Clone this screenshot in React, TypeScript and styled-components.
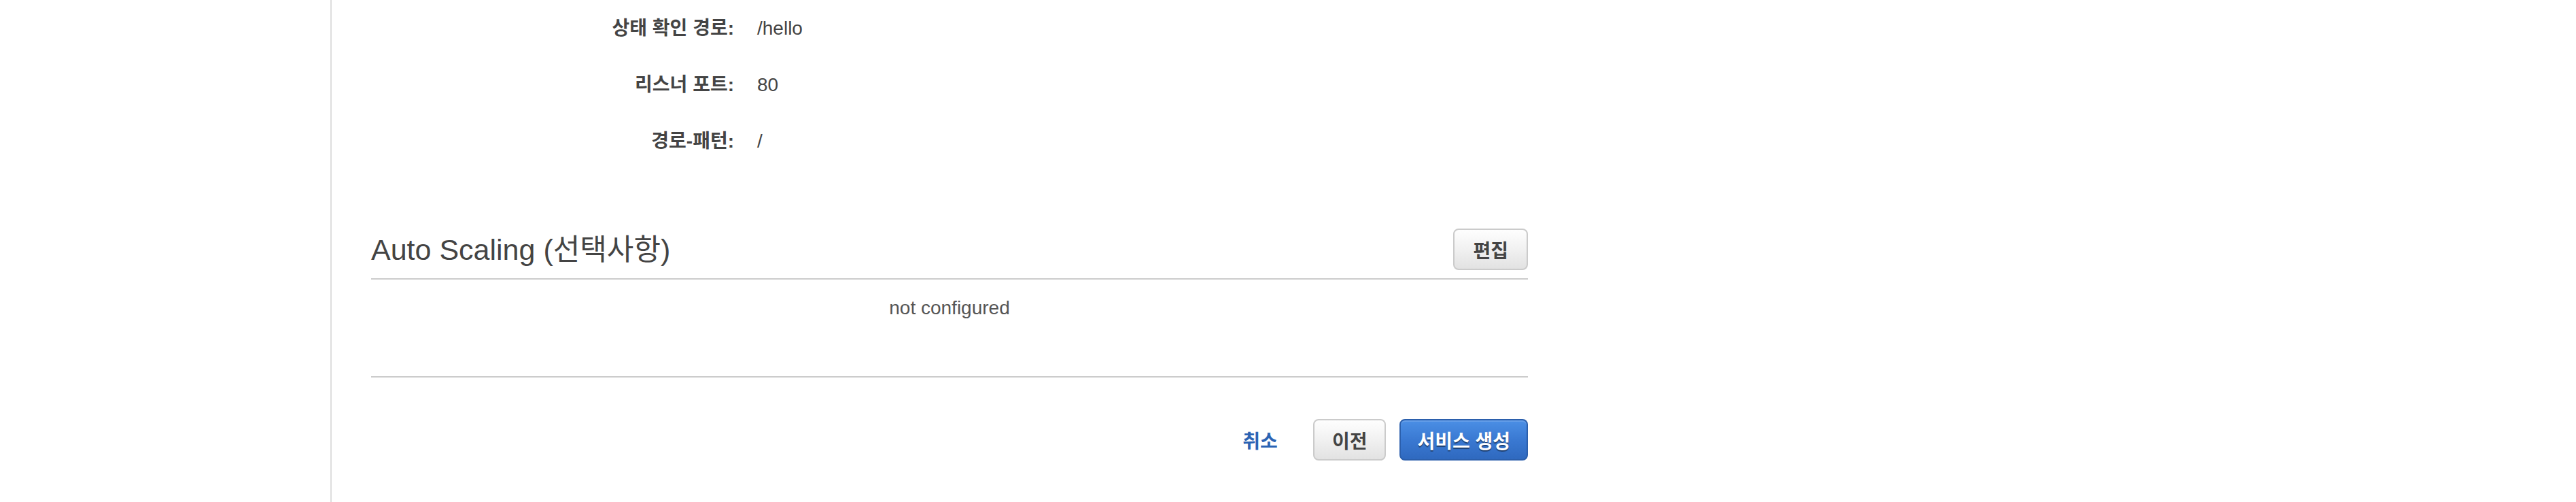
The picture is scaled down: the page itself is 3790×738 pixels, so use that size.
import React from 'react';
import { createGlobalStyle, styled } from 'styled-components';

const GlobalStyle = createGlobalStyle`
  html, body {
    margin: 0;
    padding: 0;
    background: #fff;
  }
  body {
    font-family: 'Liberation Sans', 'Noto Sans CJK KR', Arial, sans-serif;
    color: #444;
  }
`;

const Page = styled.div`
  display: flex;
  width: 100%;
  min-height: 100vh;
  box-sizing: border-box;
`;

const Sidebar = styled.aside`
  flex: 0 0 486px;
  border-right: 2px solid #dedede;
`;

const Main = styled.main`
  width: 1702px;
  padding-left: 58px;
`;

const DetailList = styled.dl`
  display: grid;
  grid-template-columns: 534px 1fr;
  grid-auto-rows: 83px;
  column-gap: 34px;
  align-items: center;
  margin: 0;
  font-size: 28px;
  line-height: 32px;
`;

const Label = styled.dt`
  text-align: right;
  font-weight: bold;
  color: #444;
`;

const Value = styled.dd`
  margin: 0;
  color: #444;
`;

const Section = styled.section`
  margin-top: 87px;
`;

const SectionHeader = styled.div`
  display: flex;
  justify-content: space-between;
  align-items: center;
  padding-bottom: 12px;
  border-bottom: 2px solid #cccccc;
`;

const SectionTitle = styled.h2`
  margin: 0;
  font-size: 43px;
  font-weight: normal;
  line-height: 50px;
  color: #444;
`;

const SectionBody = styled.div`
  height: 144px;
  box-sizing: border-box;
  padding-top: 26px;
  border-bottom: 2px solid #cccccc;
  text-align: center;
  font-size: 28px;
  line-height: 32px;
  color: #555;
`;

const Actions = styled.div`
  display: flex;
  justify-content: flex-end;
  align-items: center;
  gap: 20px;
  margin-top: 61px;
`;

const CancelLink = styled.a`
  font-size: 28px;
  font-weight: bold;
  color: #2b63b3;
  text-decoration: none;
  margin-right: 32px;
  cursor: pointer;
`;

const Button = styled.button<{ $primary?: boolean; $pad?: number }>`
  height: 61px;
  padding: 0 ${(p) => p.$pad ?? 25}px;
  border-radius: 8px;
  font-family: inherit;
  font-size: 28px;
  font-weight: bold;
  cursor: pointer;
  border: 2px solid ${(p) => (p.$primary ? '#2b5fac' : '#cbcbcb')};
  background: ${(p) =>
    p.$primary
      ? 'linear-gradient(to bottom, #4b8fe5 0%, #3a79d2 50%, #2f69bf 100%)'
      : 'linear-gradient(to bottom, #fefefe 0%, #f1f1f1 50%, #e2e2e2 100%)'};
  color: ${(p) => (p.$primary ? '#fff' : '#444')};
  text-shadow: ${(p) => (p.$primary ? '0 2px 1px rgba(0, 0, 0, 0.45)' : 'none')};
  box-shadow: ${(p) => (p.$primary ? 'inset 0 2px 0 rgba(255,255,255,0.15)' : 'none')};
`;

const details = [
  { label: '상태 확인 경로:', value: '/hello' },
  { label: '리스너 포트:', value: '80' },
  { label: '경로-패턴:', value: '/' },
];

export default function App() {
  return (
    <>
      <GlobalStyle />
      <Page>
        <Sidebar />
        <Main>
          <DetailList>
            {details.map((d) => (
              <React.Fragment key={d.label}>
                <Label>{d.label}</Label>
                <Value>{d.value}</Value>
              </React.Fragment>
            ))}
          </DetailList>

          <Section>
            <SectionHeader>
              <SectionTitle>Auto Scaling (선택사항)</SectionTitle>
              <Button $pad={27}>편집</Button>
            </SectionHeader>
            <SectionBody>not configured</SectionBody>
          </Section>

          <Actions>
            <CancelLink>취소</CancelLink>
            <Button $pad={26}>이전</Button>
            <Button $primary $pad={24}>
              서비스 생성
            </Button>
          </Actions>
        </Main>
      </Page>
    </>
  );
}
